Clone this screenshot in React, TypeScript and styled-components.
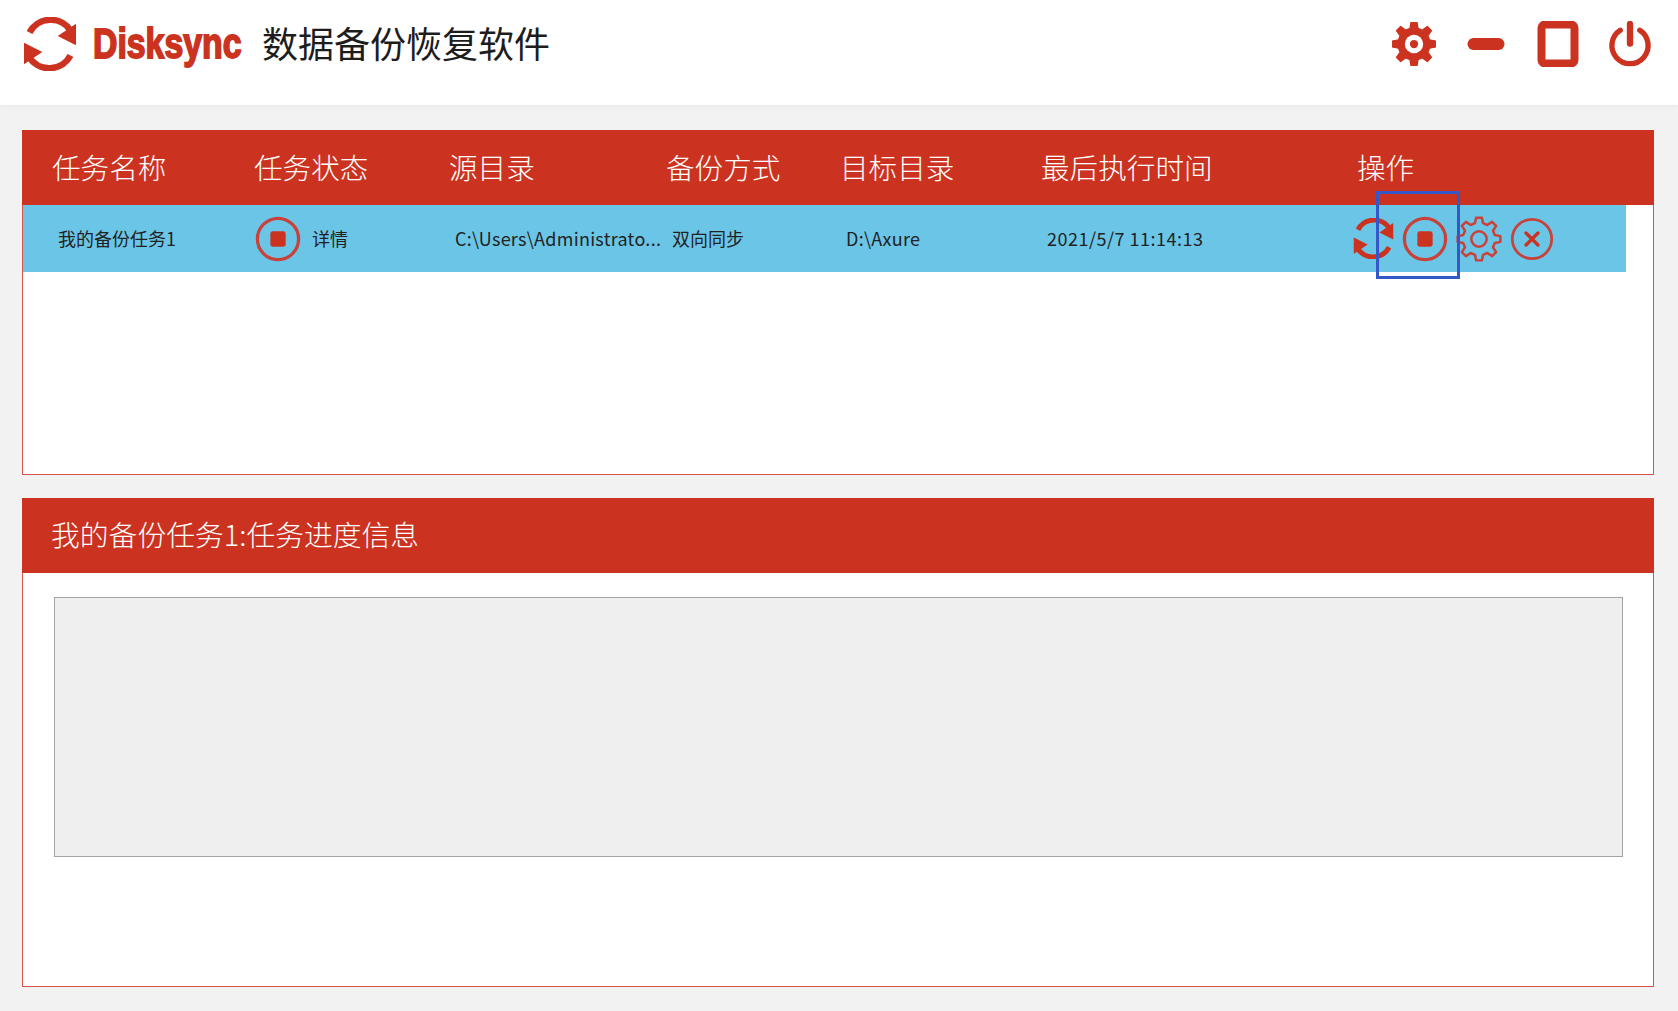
import React from "react";
import styled, { createGlobalStyle } from "styled-components";

const RED = "#cb3320";

const Global = createGlobalStyle`
  html, body { margin: 0; padding: 0; background: #f2f2f2; overflow: hidden; }
  body { font-family: "Noto Sans CJK SC", "Liberation Sans", sans-serif; }
`;

const Page = styled.div`
  width: 1678px;
  height: 1011px;
  display: flex;
  flex-direction: column;
  background: #f2f2f2;
`;

const TopBar = styled.header`
  height: 105px;
  flex: none;
  background: #fff;
  box-shadow: 0 1px 5px rgba(0, 0, 0, 0.05);
  display: flex;
  align-items: center;
  padding: 0 12px 0 24px;
  box-sizing: border-box;
`;

const Logo = styled.svg`
  width: 52px;
  height: 54px;
  flex: none;
  margin-top: -18px;
`;

const Brand = styled.span`
  display: inline-block;
  width: 149px;
  flex: none;
  white-space: nowrap;
  font-family: "Liberation Sans", sans-serif;
  font-weight: 700;
  font-size: 42px;
  line-height: 1;
  color: ${RED};
  -webkit-text-stroke: 1.8px ${RED};
  margin: -18px 0 0 17px;
  transform: scaleX(0.805);
  transform-origin: left center;
`;

const Title = styled.h1`
  margin: -21px 0 0 20px;
  font-size: 36px;
  font-weight: 400;
  line-height: 1;
  color: #1d1d1d;
`;

const WindowButtons = styled.div`
  margin: -18px 0 0 auto;
  display: grid;
  grid-template-columns: repeat(4, 72px);
  justify-items: center;
  align-items: center;
`;

const Icon = styled.svg<{ $size: number }>`
  width: ${(p) => p.$size}px;
  height: ${(p) => p.$size}px;
  flex: none;
  display: block;
`;

const Main = styled.main`
  flex: 1;
  display: flex;
  flex-direction: column;
  gap: 23px;
  padding: 25px 24px 25px 22px;
  min-height: 0;
`;

const Panel = styled.section<{ $height: number }>`
  height: ${(p) => p.$height}px;
  box-sizing: border-box;
  flex: none;
  background: #fff;
  border: 1px solid #d6534c;
  display: flex;
  flex-direction: column;
`;

const COLUMNS = "202px 195px 217px 174px 201px 316px 1fr";

const HeadRow = styled.div`
  height: 75px;
  flex: none;
  background: ${RED};
  display: grid;
  grid-template-columns: ${COLUMNS};
  align-items: center;
  padding-left: 30px;
  margin: -1px -1px 0;
  color: #fff;
  font-size: 28.6px;
  font-weight: 300;
  line-height: 1;
`;

const PanelHeading = styled.div`
  height: 75px;
  flex: none;
  box-sizing: border-box;
  background: ${RED};
  display: flex;
  align-items: center;
  padding: 0 0 2px 29px;
  margin: -1px -1px 0;
  color: #fff;
  font-size: 28.8px;
  font-weight: 300;
  line-height: 1;
`;

const TaskRow = styled.div`
  position: relative;
  height: 67px;
  width: 1603px;
  flex: none;
  background: #6bc5e7;
  display: grid;
  grid-template-columns: ${COLUMNS};
  align-items: center;
  padding-left: 35px;
  box-sizing: border-box;
  color: #222;
  font-size: 18px;
  line-height: 1;
`;

const Cell = styled.span<{ $tracking?: number }>`
  letter-spacing: ${(p) => p.$tracking ?? 0}px;
  white-space: nowrap;
  margin-bottom: 2px;
`;

const StatusCell = styled.div`
  display: flex;
  align-items: center;
  gap: 11px;
  margin-left: -5px;
`;

const Actions = styled.div`
  display: flex;
  align-items: center;
  gap: 8px;
  margin-left: -10px;
`;

const Highlight = styled.div`
  position: absolute;
  left: 1353px;
  top: -14px;
  width: 84px;
  height: 88px;
  box-sizing: border-box;
  border: 3px solid #3558c8;
  pointer-events: none;
`;

const ProgressArea = styled.div`
  margin: 24px 0 0 31px;
  width: 1569px;
  height: 260px;
  box-sizing: border-box;
  background: #efefef;
  border: 1px solid #a3a3a3;
`;

function gearPath(teeth: number, outer: number, inner: number): string {
  const pts: string[] = [];
  const step = (Math.PI * 2) / teeth;
  for (let i = 0; i < teeth; i++) {
    const a = i * step - Math.PI / 2;
    const p = (r: number, da: number) =>
      `${(24 + r * Math.cos(a + da)).toFixed(2)} ${(24 + r * Math.sin(a + da)).toFixed(2)}`;
    pts.push(
      `${i === 0 ? "M" : "L"}${p(inner, -step * 0.32)}`,
      `L${p(outer, -step * 0.17)}`,
      `L${p(outer, step * 0.17)}`,
      `L${p(inner, step * 0.32)}`
    );
  }
  return pts.join(" ") + " Z";
}

const SyncGlyph = () => (
  <g fill={RED} stroke={RED}>
    <path d="M5.5 15.5 A24 24 0 0 1 47 14" fill="none" strokeWidth="6.5" />
    <path d="M52 6.7 L52 28.3 L33.7 19 Z" stroke="none" />
    <path d="M46.5 38.5 A24 24 0 0 1 5 40" fill="none" strokeWidth="6.5" />
    <path d="M0 47.3 L0 25.7 L18.3 35 Z" stroke="none" />
  </g>
);

const StopIcon = ({ size }: { size: number }) => (
  <Icon $size={size} viewBox="0 0 48 48">
    <circle cx="24" cy="24" r="21.5" fill="none" stroke="#c9423a" strokeWidth="3.4" />
    <rect x="16" y="16" width="16" height="16" rx="2.5" fill={RED} />
  </Icon>
);

const App = () => (
  <Page>
    <Global />
    <TopBar>
      <Logo viewBox="0 0 52 54">
        <SyncGlyph />
      </Logo>
      <Brand>Disksync</Brand>
      <Title>数据备份恢复软件</Title>
      <WindowButtons>
        <Icon $size={44} viewBox="0 0 48 48">
          <path d={gearPath(8, 24, 17.5)} fill={RED} stroke={RED} strokeWidth="1.5" strokeLinejoin="round" />
          <circle cx="24" cy="24" r="10" fill="#fff" />
          <circle cx="24" cy="24" r="4.5" fill={RED} />
        </Icon>
        <Icon $size={38} viewBox="0 0 38 38">
          <rect x="0.5" y="13" width="37" height="12" rx="6" fill={RED} />
        </Icon>
        <Icon $size={46} viewBox="0 0 46 46">
          <rect x="6.5" y="3.5" width="33" height="39" rx="3.5" fill="none" stroke={RED} strokeWidth="8" />
        </Icon>
        <Icon $size={46} viewBox="0 0 46 47">
          <path d="M13 9.5 A18.5 18.5 0 1 0 33 9.5" fill="none" stroke={RED} strokeWidth="5.5" strokeLinecap="round" />
          <path d="M23 3 V23" fill="none" stroke={RED} strokeWidth="6.5" strokeLinecap="round" />
        </Icon>
      </WindowButtons>
    </TopBar>
    <Main>
      <Panel $height={345}>
        <HeadRow>
          <span>任务名称</span>
          <span>任务状态</span>
          <span>源目录</span>
          <span>备份方式</span>
          <span>目标目录</span>
          <span>最后执行时间</span>
          <span>操作</span>
        </HeadRow>
        <TaskRow>
          <Cell>我的备份任务1</Cell>
          <StatusCell>
            <StopIcon size={46} />
            <Cell>详情</Cell>
          </StatusCell>
          <Cell $tracking={0.27}>C:\Users\Administrato...</Cell>
          <Cell>双向同步</Cell>
          <Cell $tracking={0.3}>D:\Axure</Cell>
          <Cell $tracking={0.5}>2021/5/7 11:14:13</Cell>
          <Actions>
            <Icon $size={41} viewBox="0 0 52 54">
              <SyncGlyph />
            </Icon>
            <StopIcon size={46} />
            <Icon $size={46} viewBox="0 0 48 48">
              <path d={gearPath(8, 22.5, 17)} fill="none" stroke="#c9423a" strokeWidth="2.6" strokeLinejoin="round" />
              <circle cx="24" cy="24" r="8" fill="none" stroke="#c9423a" strokeWidth="2.6" />
            </Icon>
            <Icon $size={44} viewBox="0 0 48 48">
              <circle cx="24" cy="24" r="21.5" fill="none" stroke="#c9423a" strokeWidth="3" />
              <path d="M17.5 17.5 L30.5 30.5 M30.5 17.5 L17.5 30.5" fill="none" stroke={RED} strokeWidth="3.6" strokeLinecap="round" />
            </Icon>
          </Actions>
          <Highlight />
        </TaskRow>
      </Panel>
      <Panel $height={489}>
        <PanelHeading>我的备份任务1:任务进度信息</PanelHeading>
        <ProgressArea />
      </Panel>
    </Main>
  </Page>
);

export default App;
